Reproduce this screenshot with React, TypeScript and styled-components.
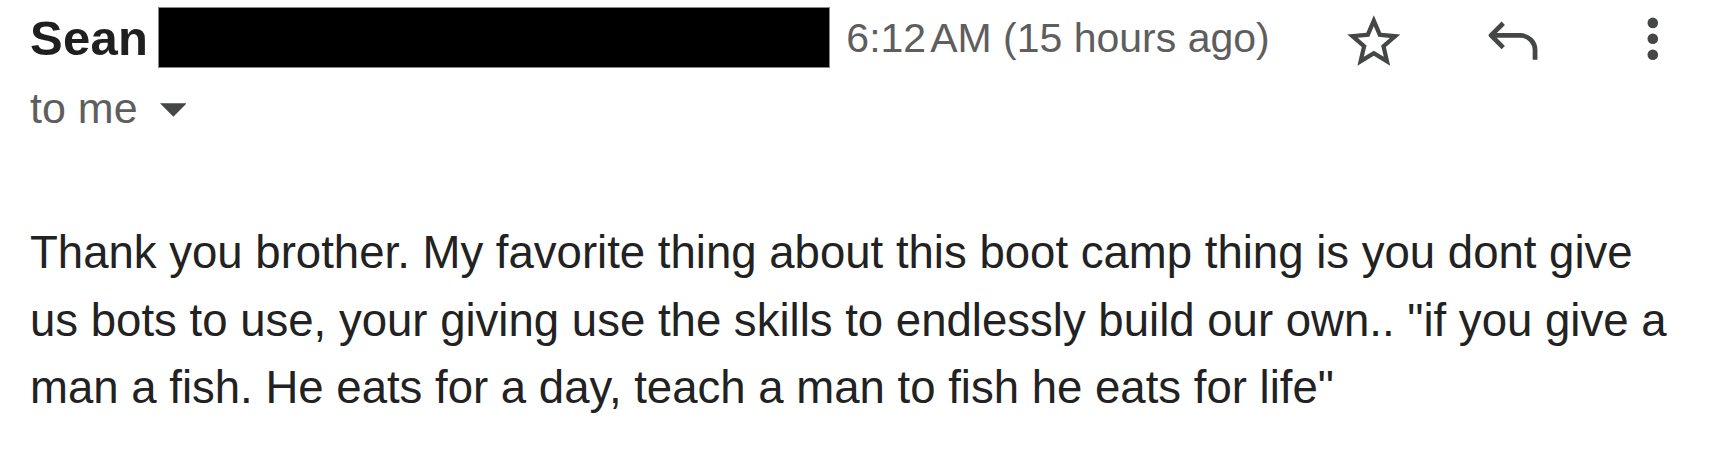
import styled, { createGlobalStyle } from 'styled-components';

const GlobalStyle = createGlobalStyle`
  html, body {
    margin: 0;
    padding: 0;
    background: #ffffff;
  }
  body {
    font-family: 'Liberation Sans', Arial, Helvetica, sans-serif;
    color: #222222;
  }
`;

// one message of a thread, shown at a large zoom
const App = () => {
  return (
    <>
      <GlobalStyle />
      <Message>
        <Header>
          <SenderName>Sean</SenderName>
          <Redacted />
          <Time>
            <Clock>6:12</Clock>AM (15 hours ago)
          </Time>
          <Actions>
            <IconButton $offset={2.7} aria-label="Star">
              <svg viewBox="0 0 24 24" width="100%" height="100%">
                <path
                  fill="#444746"
                  d="M22 9.24l-7.19-.62L12 2 9.19 8.63 2 9.24l5.46 4.73L5.82 21 12 17.27 18.18 21l-1.63-7.03L22 9.24zM12 15.4l-3.76 2.27 1-4.28-3.32-2.88 4.38-.38L12 6.1l1.71 4.04 4.38.38-3.32 2.88 1 4.28L12 15.4z"
                />
              </svg>
            </IconButton>
            <IconButton $offset={2.7} aria-label="Reply">
              <svg viewBox="0 0 24 24" width="100%" height="100%">
                <path
                  fill="none"
                  stroke="#444746"
                  strokeWidth="1.8"
                  strokeLinejoin="round"
                  d="M8.4 5 L3.8 9.6 L8.4 14.2 M4 9.6 H14.8 A5.6 5.6 0 0 1 20.4 15.2 V18.8"
                />
              </svg>
            </IconButton>
            <IconButton $offset={-0.3} aria-label="More">
              <svg viewBox="0 0 24 24" width="100%" height="100%">
                <g fill="#444746">
                  <circle cx="12" cy="6" r="2" />
                  <circle cx="12" cy="12" r="2" />
                  <circle cx="12" cy="18" r="2" />
                </g>
              </svg>
            </IconButton>
          </Actions>
        </Header>
        <Recipients>
          <ToMe>to me</ToMe>
          <DropCaret viewBox="0 0 10 5" aria-hidden>
            <polygon points="0,0 10,0 5,5" fill="#444746" />
          </DropCaret>
        </Recipients>
        <Body>
          Thank you brother. My favorite thing about this boot camp thing is you dont give us bots
          to use, your giving use the skills to endlessly build our own.. "if you give a man a
          fish. He eats for a day, teach a man to fish he eats for life"
        </Body>
      </Message>
    </>
  );
};

export default App;

const Message = styled.div`
  padding: 7px 31.7px 0 30px;
`;

const Header = styled.div`
  display: flex;
  align-items: flex-start;
  height: 61px;
`;

const SenderName = styled.span`
  font-size: 49px;
  font-weight: 700;
  line-height: 61px;
  padding-top: 0.5px;
  color: #1f1f1f;
  letter-spacing: 0.3px;
`;

const Redacted = styled.div`
  flex-shrink: 0;
  width: 670px;
  height: 59px;
  margin-left: 10px;
  background: #000000;
  border: 1px solid #8a8a8a;
`;

const Time = styled.span`
  margin-left: 16px;
  font-size: 41px;
  line-height: 61px;
  padding-top: 1px;
  color: #5e5e5e;
  white-space: nowrap;
`;

const Clock = styled.span`
  margin-right: 4px;
`;

const Actions = styled.div`
  display: flex;
  gap: 76px;
  margin-left: auto;
`;

const IconButton = styled.div<{ $offset: number }>`
  width: 63.6px;
  height: 63.6px;
  margin-top: ${(p) => p.$offset}px;
  cursor: pointer;

  svg {
    display: block;
  }
`;

const Recipients = styled.div`
  display: flex;
  align-items: flex-start;
  margin-top: 10.8px;
  height: 58px;
`;

const ToMe = styled.span`
  font-size: 43px;
  line-height: 58px;
  color: #5e5e5e;
`;

const DropCaret = styled.svg`
  flex-shrink: 0;
  width: 26.7px;
  height: 14px;
  margin-left: 22px;
  margin-top: 23.9px;
`;

const Body = styled.div`
  margin-top: 82.4px;
  font-size: 45.55px;
  line-height: 67.5px;
  color: #222222;
`;
